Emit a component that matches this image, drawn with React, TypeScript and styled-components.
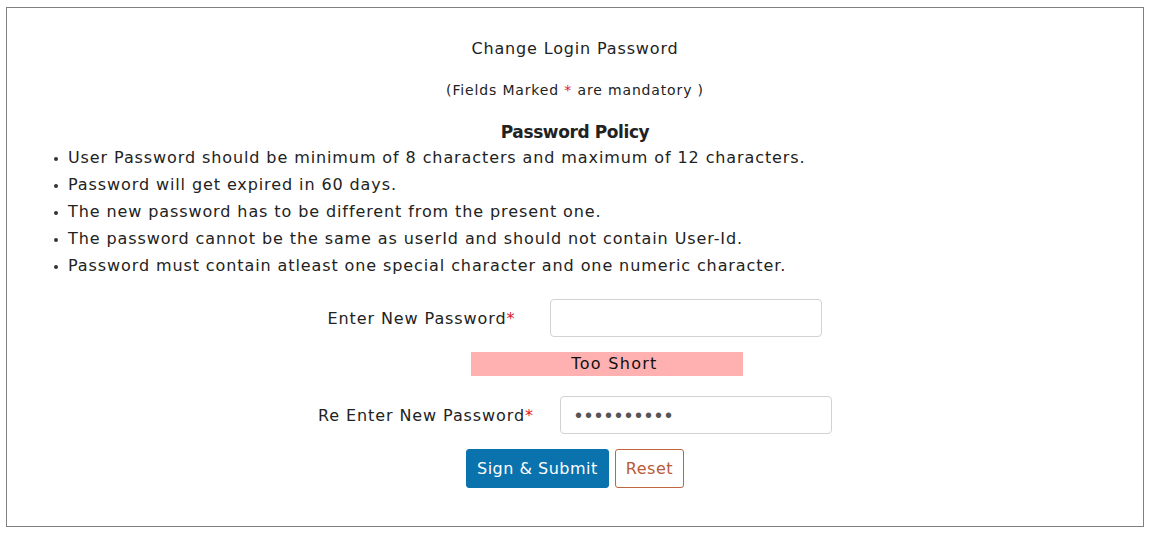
import React from "react";
import styled, { createGlobalStyle } from "styled-components";

const GlobalStyle = createGlobalStyle`
  body {
    margin: 0;
    background: #ffffff;
    font-family: "DejaVu Sans", "Open Sans", sans-serif;
    color: #222222;
  }
`;

const policyRules = [
  "User Password should be minimum of 8 characters and maximum of 12 characters.",
  "Password will get expired in 60 days.",
  "The new password has to be different from the present one.",
  "The password cannot be the same as userId and should not contain User-Id.",
  "Password must contain atleast one special character and one numeric character.",
];

const Panel = styled.div`
  box-sizing: border-box;
  margin: 7px 0 0 6px;
  width: 1138px;
  height: 520px;
  border: 1px solid #808080;
  padding-top: 29px;
  display: flex;
  flex-direction: column;
  align-items: center;
`;

const Title = styled.div`
  font-size: 16px;
  line-height: 24px;
  letter-spacing: 0.85px;
`;

const Note = styled.div`
  margin-top: 19px;
  font-size: 14px;
  line-height: 20px;
  letter-spacing: 0.85px;
`;

const Star = styled.span`
  color: #e0202a;
`;

const PolicyHeading = styled.div`
  margin-top: 20px;
  font-size: 17px;
  line-height: 24px;
  font-weight: 700;
  letter-spacing: -0.4px;
`;

const RuleList = styled.ul`
  align-self: stretch;
  margin: 0;
  padding-left: 61px;
  list-style: none;
`;

const Rule = styled.li`
  font-size: 16px;
  line-height: 27px;
  letter-spacing: 0.9px;
  &::before {
    content: "";
    display: inline-block;
    width: 4px;
    height: 4px;
    border-radius: 50%;
    background: #333;
    margin: 0 10px 0 -14px;
    vertical-align: middle;
  }
`;

const FieldRow = styled.div<{ $top: number; $gap: number }>`
  margin-top: ${(p) => p.$top}px;
  display: flex;
  align-items: center;
  gap: ${(p) => p.$gap}px;
`;

const Label = styled.label`
  font-size: 16px;
  letter-spacing: 0.9px;
`;

const Input = styled.input`
  box-sizing: border-box;
  width: 272px;
  height: 38px;
  border: 1px solid #d2d2d2;
  border-radius: 4px;
  padding: 0 14px;
  font-family: "Liberation Sans", sans-serif;
  font-size: 20px;
  letter-spacing: 3px;
  color: #555;
  outline: none;
`;

const StrengthBar = styled.div`
  box-sizing: border-box;
  margin: 15px 0 0 64px;
  width: 272px;
  height: 24px;
  padding-left: 15px;
  background: #ffb0b0;
  font-size: 16px;
  line-height: 24px;
  letter-spacing: 1.3px;
  text-align: center;
  color: #111;
`;

const ButtonRow = styled.div`
  margin-top: 15px;
  display: flex;
  gap: 6px;
`;

const Button = styled.button<{ $primary?: boolean }>`
  box-sizing: border-box;
  height: 39px;
  padding: 0 10px;
  border-radius: 3px;
  font-family: inherit;
  font-size: 16px;
  letter-spacing: 0.5px;
  cursor: pointer;
  border: 1px solid ${(p) => (p.$primary ? "#0a72ad" : "#c0653f")};
  background: ${(p) => (p.$primary ? "#0a72ad" : "#ffffff")};
  color: ${(p) => (p.$primary ? "#ffffff" : "#b85a36")};
`;

export default function App() {
  return (
    <>
      <GlobalStyle />
      <Panel>
        <Title>Change Login Password</Title>
        <Note>
          (Fields Marked <Star>*</Star> are mandatory )
        </Note>
        <PolicyHeading>Password Policy</PolicyHeading>
        <RuleList>
          {policyRules.map((r) => (
            <Rule key={r}>{r}</Rule>
          ))}
        </RuleList>
        <FieldRow $top={20} $gap={35}>
          <Label>
            Enter New Password<Star>*</Star>
          </Label>
          <Input type="password" />
        </FieldRow>
        <StrengthBar>Too Short</StrengthBar>
        <FieldRow $top={20} $gap={26}>
          <Label>
            Re Enter New Password<Star>*</Star>
          </Label>
          <Input type="password" defaultValue="abcdefghij" />
        </FieldRow>
        <ButtonRow>
          <Button $primary>Sign &amp; Submit</Button>
          <Button>Reset</Button>
        </ButtonRow>
      </Panel>
    </>
  );
}
